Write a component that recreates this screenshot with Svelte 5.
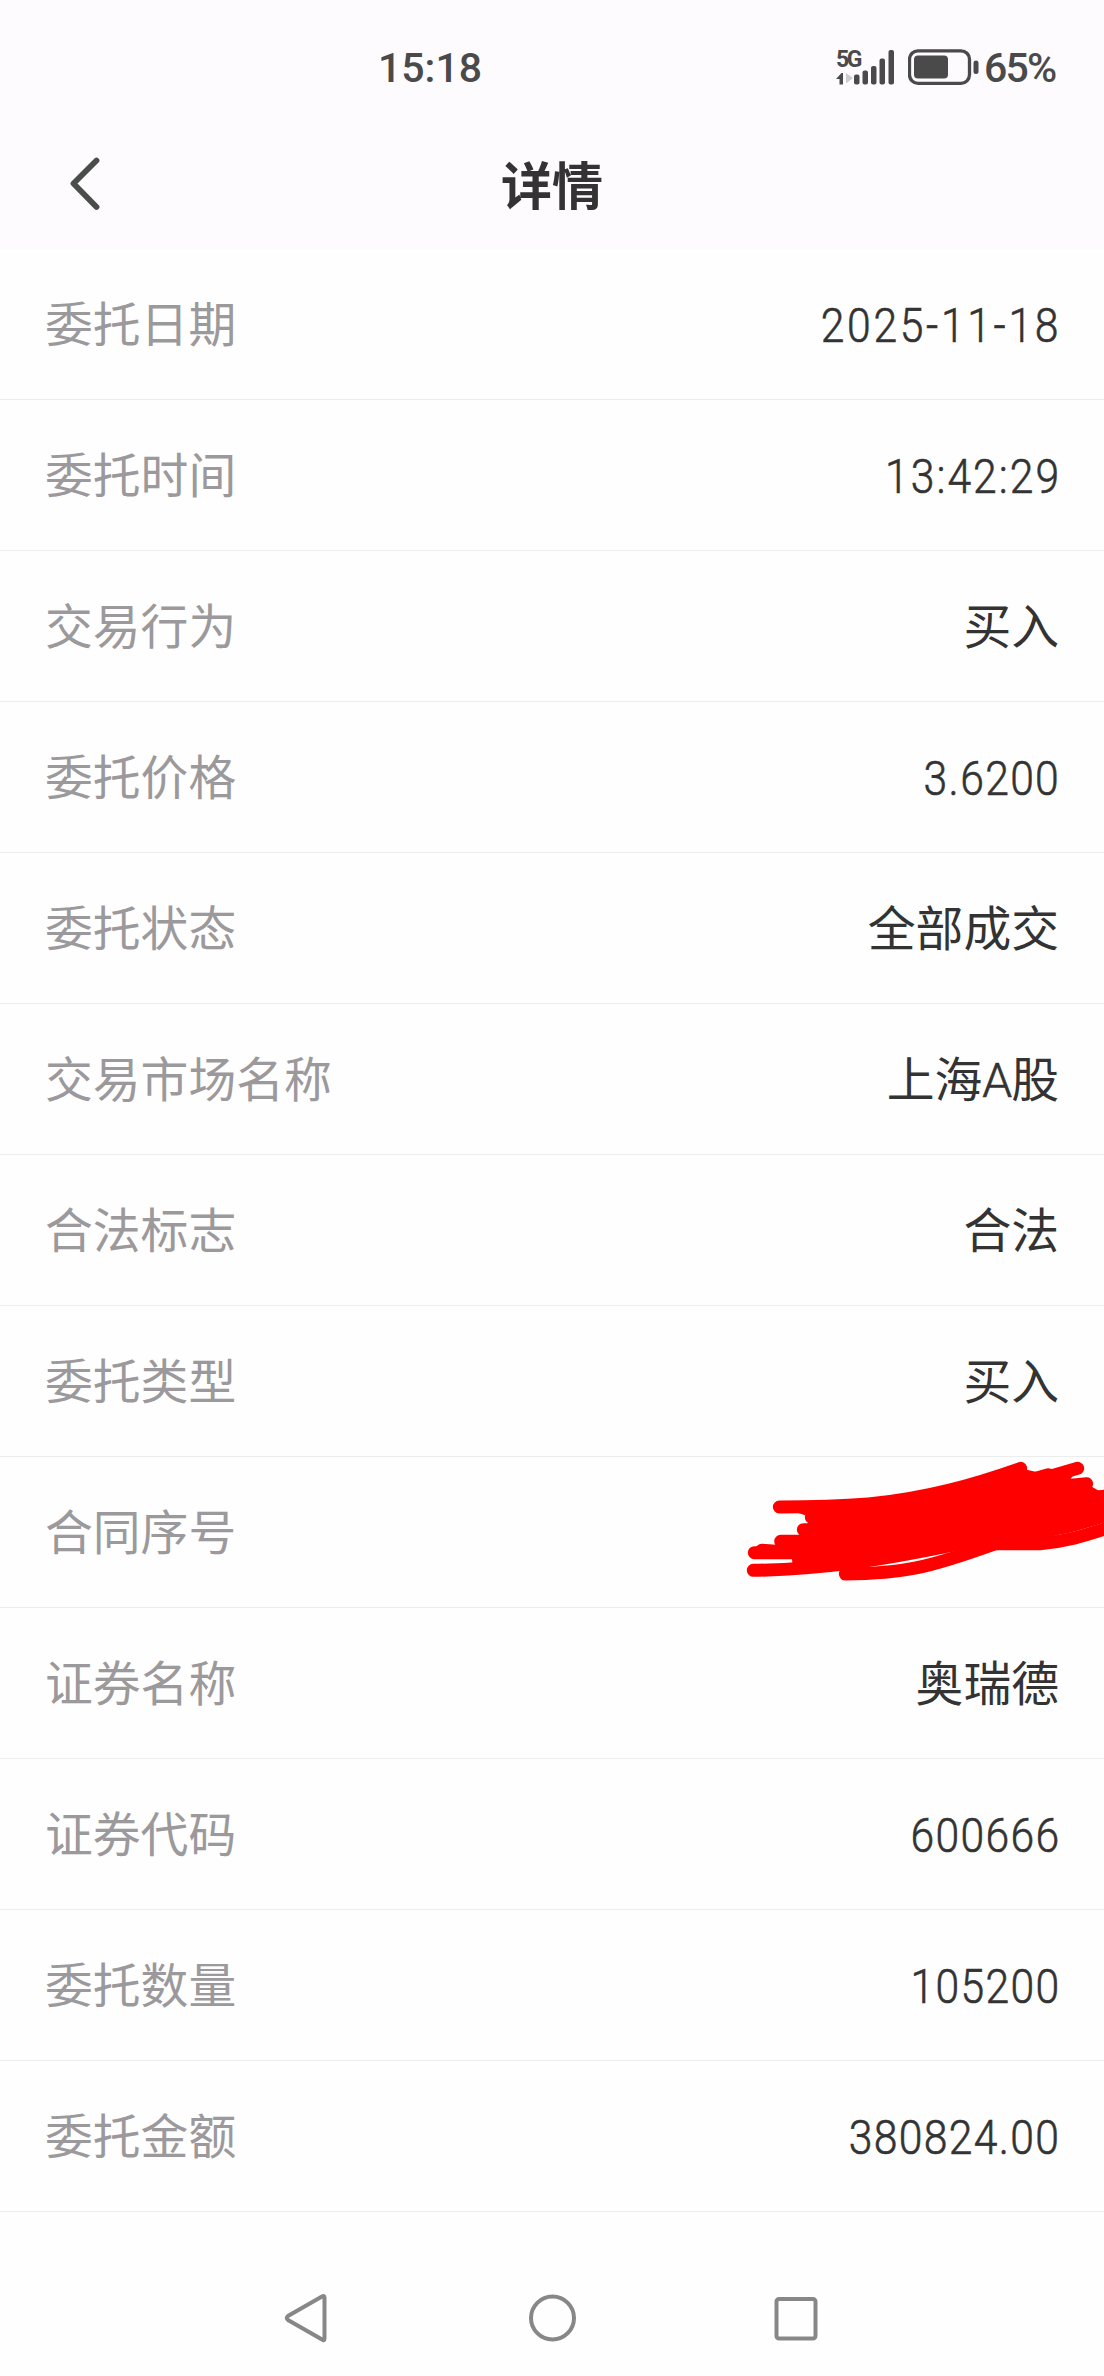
<script>
  const rows = [
    { label: '委托日期', value: '2025-11-18', kind: 'date' },
    { label: '委托时间', value: '13:42:29', kind: 'time' },
    { label: '交易行为', value: '买入' },
    { label: '委托价格', value: '3.6200', kind: 'num' },
    { label: '委托状态', value: '全部成交' },
    { label: '交易市场名称', value: '上海A股' },
    { label: '合法标志', value: '合法' },
    { label: '委托类型', value: '买入' },
    { label: '合同序号', value: '', hidden: true },
    { label: '证券名称', value: '奥瑞德' },
    { label: '证券代码', value: '600666', kind: 'num' },
    { label: '委托数量', value: '105200', kind: 'num' },
    { label: '委托金额', value: '380824.00', kind: 'num' }
  ];

  // Latin letters inside Chinese values are set in a lighter face.
  const split = (text) => text.split(/([A-Z]+)/).filter(Boolean);
</script>

<div class="screen">
  <div class="top">
    <div class="status">
      <span class="clock">15:18</span>
      <div class="indicators">
        <div class="signal">
          <span class="net">5G</span>
          <svg width="60" height="36" viewBox="0 0 60 36" fill="#4a4a4a">
            <path d="M0 30 L5.500 24 H7 V35.500 H3.500 V30Z" />
            <path d="M10 24 L17 29 L10 34.500Z" fill="#cfcccf" />
            <rect x="18" y="25.500" width="5.500" height="10" rx="2" />
            <rect x="26.500" y="21.500" width="5.500" height="14" rx="2" />
            <rect x="35" y="17" width="5.500" height="18.500" rx="2" />
            <rect x="43.500" y="9.500" width="5.500" height="26" rx="2" />
            <rect x="52.500" y="1" width="5.500" height="34.500" rx="2" />
          </svg>
        </div>
        <svg class="battery" width="72" height="36" viewBox="0 0 72 36">
          <rect x="1.500" y="1.800" width="60" height="32.500" rx="8.500" fill="none" stroke="#4a4a4a" stroke-width="3.300" />
          <rect x="6" y="6.500" width="34" height="23" rx="4" fill="#4a4a4a" />
          <rect x="65.500" y="11.500" width="5" height="13.500" rx="2.500" fill="#4a4a4a" />
        </svg>
        <span class="percent">65%</span>
      </div>
    </div>
    <header class="nav">
      <svg class="back" width="40" height="60" viewBox="0 0 40 60">
        <path d="M31.500 6.500 L8.500 29.500 L31.500 53" fill="none" stroke="#4a4e4a" stroke-width="5.800" stroke-linecap="round" stroke-linejoin="round" />
      </svg>
      <h1>详情</h1>
    </header>
  </div>

  <main>
    {#each rows as row}
      <div class="row">
        <span class="label">{row.label}</span>
        {#if row.hidden}
          <svg class="scribble" width="384" height="180" viewBox="0 0 1152 540">
            <path
              class="fill"
              d="M178 231 Q330 231 445 222 C620 205 760 165 900 115 L980 133 L1072 116 L1050 150 L1100 161 L1160 196 V265 C1080 285 1010 310 960 340 L840 341 C760 355 600 375 445 391 C390 400 300 408 218 405 L215 380 L250 335 L250 300 L275 262Z"
            />
            <path d="M178 231 Q330 231 445 222 C620 205 760 165 902 115" />
            <path d="M274 262 H420 M250 299 H420 M182 334 H420 M103 368 H420" />
            <path d="M125 361 L200 366" />
            <path d="M100 421 C300 418 460 395 720 341" />
            <path d="M376 432 C550 430 620 415 820 343" />
            <path d="M740 341 H960 C1040 335 1090 318 1170 292" />
            <path d="M900 158 L985 134 M970 145 L1073 115 M960 175 L1100 161" />
            <path d="M960 302 C1030 299 1080 278 1170 253 M1040 210 L1170 197" />
          </svg>
        {:else if row.kind}
          <span class="digits {row.kind}">{row.value}</span>
        {:else}
          <span class="value">
            {#each split(row.value) as part}<span class:latin={/[A-Z]/.test(part)}>{part}</span>{/each}
          </span>
        {/if}
      </div>
    {/each}
  </main>

  <footer>
    <svg width="48" height="54" viewBox="0 0 48 54">
      <path d="M41.500 5.500 V46.500 Q41.500 49.500 39 47.500 L5 28 Q2.500 26 5 24 L39 4.500 Q41.500 3 41.500 5.500Z" />
    </svg>
    <svg width="48" height="54" viewBox="0 0 48 54">
      <circle cx="24.500" cy="26" r="21.500" />
    </svg>
    <svg width="48" height="54" viewBox="0 0 48 54">
      <rect x="4.500" y="7" width="39" height="39.500" rx="2.500" />
    </svg>
  </footer>
</div>

<style>
  :global(body) {
    background: #fefefe;
  }
  .screen {
    width: 1104px;
    height: 2376px;
    display: flex;
    flex-direction: column;
    overflow: hidden;
    background: #fefefe;
    color: #333;
    font-family: Roboto, 'Noto Sans CJK SC', sans-serif;
  }
  .top {
    height: 249px;
    background: #fefbff;
  }
  .status {
    height: 134px;
    box-sizing: border-box;
    padding: 0 46px 0 378px;
    display: flex;
    align-items: center;
    justify-content: space-between;
    color: #4a4a4a;
  }
  .clock,
  .percent {
    font-size: 41px;
    font-weight: 500;
    line-height: 48px;
    padding-top: 2px;
  }
  .percent {
    width: 74px;
    margin-left: 4px;
    letter-spacing: -1.800px;
    white-space: nowrap;
  }
  .indicators {
    display: flex;
    align-items: center;
  }
  .signal {
    position: relative;
    display: flex;
    margin-right: 12px;
  }
  .net {
    position: absolute;
    left: 0;
    top: -1px;
    font-size: 23px;
    font-weight: 700;
    line-height: 23px;
    letter-spacing: -2.500px;
  }
  .nav {
    height: 100px;
    display: grid;
    grid-template-columns: 64px 1fr 64px;
    align-items: center;
    padding-top: 1px;
  }
  .back {
    margin: 0 0 3px 65px;
    align-self: center;
  }
  h1 {
    margin: 0;
    padding-bottom: 5px;
    font-family: 'Noto Sans CJK SC', sans-serif;
    font-size: 51px;
    line-height: 60px;
    font-weight: 700;
    text-align: center;
  }
  .row {
    position: relative;
    height: 151px;
    box-sizing: border-box;
    border-bottom: 1px solid #ededed;
    padding: 0 45px;
    display: flex;
    align-items: center;
    justify-content: space-between;
    font-size: 47.800px;
    line-height: 70px;
  }
  .label {
    color: #9b999b;
    font-family: 'Noto Sans CJK SC', sans-serif;
    padding-bottom: 5px;
  }
  .value {
    padding-top: 3px;
  }
  .latin {
    font-weight: 300;
    letter-spacing: -1px;
    -webkit-text-stroke: 0.6px currentColor;
  }
  .digits {
    padding-top: 4px;
    font-size: 48.500px;
    font-weight: 300;
    -webkit-text-stroke: 0.6px currentColor;
    transform: scaleX(0.88);
    transform-origin: right;
    letter-spacing: 1.500px;
    margin-right: -1px;
  }
  .date {
    letter-spacing: 3px;
    margin-right: -2px;
  }
  .time {
    letter-spacing: 2.300px;
    margin-right: -2px;
  }
  .scribble {
    position: absolute;
    right: 0;
    top: -27px;
    fill: none;
    stroke: #f00;
    stroke-width: 39;
    stroke-linecap: round;
    stroke-linejoin: round;
  }
  .fill {
    fill: #f00;
    stroke: none;
  }
  footer {
    height: 164px;
    box-sizing: border-box;
    padding: 80px 284px 0 283px;
    display: flex;
    justify-content: space-between;
    align-items: flex-start;
  }
  footer svg {
    fill: none;
    stroke: #868886;
    stroke-width: 4;
  }
</style>
